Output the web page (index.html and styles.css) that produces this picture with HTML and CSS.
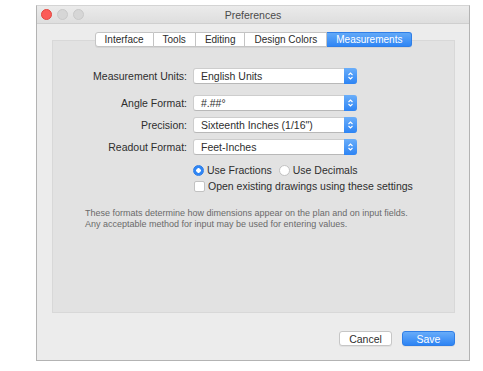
FILE: index.html
```html
<!DOCTYPE html>
<html lang="en">
<head>
    <meta charset="UTF-8">
    <title>Preferences</title>
    <link rel="stylesheet" href="styles.css">
</head>
<body>

    <div class="window">
        <!-- Title Bar -->
        <div class="titlebar">
            <div class="lights">
                <span class="light close"></span>
                <span class="light"></span>
                <span class="light"></span>
            </div>
            <div class="title">Preferences</div>
            <div></div>
        </div>

        <div class="content">
            <!-- Tabs -->
            <div class="tabs">
                <span class="tab">Interface</span>
                <span class="tab">Tools</span>
                <span class="tab">Editing</span>
                <span class="tab">Design Colors</span>
                <span class="tab active">Measurements</span>
            </div>

            <div class="panel">
                <div class="form">
                    <label class="first">Measurement Units:</label>
                    <div class="popup first">English Units<span class="stepper"><svg width="7" height="10" viewBox="0 0 7 10"><path d="M1.5 4 L3.5 2 L5.5 4 M1.5 6 L3.5 8 L5.5 6" fill="none" stroke="#fff" stroke-width="1.1"/></svg></span></div>

                    <label>Angle Format:</label>
                    <div class="popup">#.##°<span class="stepper"><svg width="7" height="10" viewBox="0 0 7 10"><path d="M1.5 4 L3.5 2 L5.5 4 M1.5 6 L3.5 8 L5.5 6" fill="none" stroke="#fff" stroke-width="1.1"/></svg></span></div>

                    <label>Precision:</label>
                    <div class="popup">Sixteenth Inches (1/16")<span class="stepper"><svg width="7" height="10" viewBox="0 0 7 10"><path d="M1.5 4 L3.5 2 L5.5 4 M1.5 6 L3.5 8 L5.5 6" fill="none" stroke="#fff" stroke-width="1.1"/></svg></span></div>

                    <label>Readout Format:</label>
                    <div class="popup">Feet-Inches<span class="stepper"><svg width="7" height="10" viewBox="0 0 7 10"><path d="M1.5 4 L3.5 2 L5.5 4 M1.5 6 L3.5 8 L5.5 6" fill="none" stroke="#fff" stroke-width="1.1"/></svg></span></div>

                    <div></div>
                    <div class="options">
                        <div class="option-row">
                            <span class="radio checked"></span><span>Use Fractions</span>
                            <span class="radio second"></span><span>Use Decimals</span>
                        </div>
                        <div class="option-row">
                            <span class="checkbox"></span><span>Open existing drawings using these settings</span>
                        </div>
                    </div>
                </div>

                <p class="note">These formats determine how dimensions appear on the plan and on input fields.<br>Any acceptable method for input may be used for entering values.</p>
            </div>

            <!-- Buttons -->
            <div class="buttons">
                <button class="btn">Cancel</button>
                <button class="btn primary">Save</button>
            </div>
        </div>
    </div>

</body>
</html>
```

FILE: styles.css
```css
/* Global Styles */
body {
    margin: 0;
    background: #ffffff;
    font-family: "Liberation Sans", Arial, sans-serif;
    color: #2e2e2e;
}

.window {
    box-sizing: border-box;
    width: 434px;
    height: 356px;
    margin: 5px 0 0 36px;
    background: #ececec;
    border: 1px solid #b3b3b3;
    border-top-color: #d4d4d4;
}

/* Title Bar */
.titlebar {
    box-sizing: border-box;
    height: 18px;
    display: grid;
    grid-template-columns: 1fr auto 1fr;
    align-items: center;
    background: linear-gradient(#ebebeb, #dedede);
    border-bottom: 1px solid #cfcfcf;
}

.lights {
    display: flex;
    gap: 5px;
    padding-left: 4px;
}

.light {
    box-sizing: border-box;
    width: 11px;
    height: 11px;
    border-radius: 50%;
    background: #d6d6d6;
    border: 1px solid #c9c9c9;
}

.light.close {
    background: #fc5b57;
    border-color: #e2463f;
}

.title {
    font-size: 10.5px;
    color: #4a4a4a;
}

/* Content */
.content {
    padding: 8px 14px 0 15px;
}

.tabs {
    position: relative;
    z-index: 1;
    display: flex;
    justify-content: center;
    margin-bottom: -7px;
}

.tab {
    box-sizing: border-box;
    height: 15px;
    line-height: 13px;
    padding: 0 9px;
    font-size: 10px;
    color: #2b2b2b;
    background: #ffffff;
    border: 1px solid #c4c4c4;
    border-left: none;
    box-shadow: 0 1px 0 rgba(0, 0, 0, 0.06);
}

.tab:first-child {
    border-left: 1px solid #c4c4c4;
    border-radius: 3px 0 0 3px;
}

.tab.active {
    color: #ffffff;
    background: linear-gradient(#62a9f8, #2f86f5);
    border-color: #2f7ee6;
    border-radius: 0 3px 3px 0;
}

.panel {
    box-sizing: border-box;
    height: 273px;
    background: #e2e2e2;
    border: 1px solid #d8d8d8;
    padding-top: 27px;
}

/* Form */
.form {
    display: grid;
    grid-template-columns: 134px 164px;
    column-gap: 6px;
    row-gap: 6px;
    align-items: center;
    font-size: 10.5px;
}

.form label {
    text-align: right;
    color: #2e2e2e;
}

.form .first {
    margin-bottom: 5px;
}

.popup {
    box-sizing: border-box;
    position: relative;
    height: 16px;
    line-height: 14px;
    padding-left: 7px;
    background: #ffffff;
    border: 1px solid #cdcdcd;
    border-bottom-color: #b8b8b8;
    border-radius: 3px;
    color: #2e2e2e;
}

.stepper {
    position: absolute;
    top: -1px;
    right: -1px;
    bottom: -1px;
    width: 13px;
    display: flex;
    align-items: center;
    justify-content: center;
    background: linear-gradient(#6aaefa, #2d84f4);
    border-radius: 0 3px 3px 0;
}

.options {
    display: flex;
    flex-direction: column;
    gap: 2px;
    margin-top: 2px;
    white-space: nowrap;
}

.option-row {
    display: flex;
    align-items: center;
    height: 14px;
}

.radio {
    box-sizing: border-box;
    flex: none;
    width: 11px;
    height: 11px;
    margin-right: 3px;
    border-radius: 50%;
    background: #ffffff;
    border: 1px solid #c2c2c2;
}

.radio.checked {
    background: radial-gradient(circle, #ffffff 0 2px, #2f86f5 2.5px);
    border-color: #2f7ee6;
}

.radio.second {
    margin-left: 7px;
}

.checkbox {
    box-sizing: border-box;
    flex: none;
    width: 11px;
    height: 11px;
    margin-left: 1px;
    margin-right: 3px;
    border-radius: 2px;
    background: #ffffff;
    border: 1px solid #c2c2c2;
}

.note {
    margin: 15px 0 0 32px;
    font-size: 9px;
    line-height: 11px;
    color: #6a6a6a;
}

/* Buttons */
.buttons {
    display: flex;
    justify-content: flex-end;
    gap: 10px;
    margin-top: 18px;
}

.btn {
    box-sizing: border-box;
    width: 53px;
    height: 15px;
    padding: 0;
    font-family: inherit;
    font-size: 10.5px;
    color: #2e2e2e;
    background: #ffffff;
    border: 1px solid #c6c6c6;
    border-radius: 3px;
    box-shadow: 0 1px 0 rgba(0, 0, 0, 0.05);
}

.btn.primary {
    color: #ffffff;
    background: linear-gradient(#68acf9, #2d84f4);
    border-color: #2f7ee6;
}
```
